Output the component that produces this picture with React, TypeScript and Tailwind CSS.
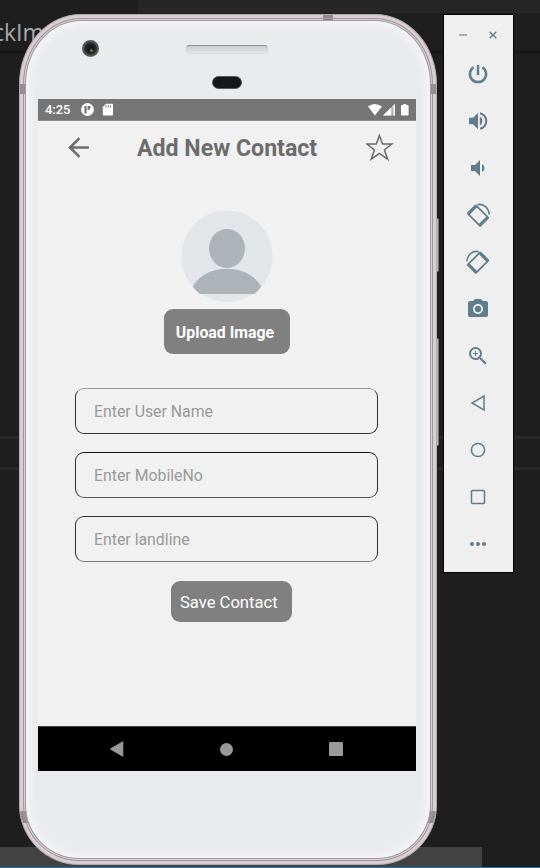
import React from "react";
import { MdPowerSettingsNew, MdVolumeUp, MdVolumeDown, MdCameraAlt, MdZoomIn, MdArrowBack } from "react-icons/md";

function RotateIcon({ flip }: { flip?: boolean }) {
  return (
    <svg width="26" height="26" viewBox="0 0 26 26" fill="none" className={flip ? "-scale-x-100" : ""}>
      <g transform="translate(13 13.6) rotate(-45)">
        <path
          fillRule="evenodd"
          fill="currentColor"
          d="M-5.2 -9.8H5.2Q6.7 -9.8 6.7 -8.3V8.3Q6.7 9.8 5.2 9.8H-5.2Q-6.7 9.8 -6.7 8.3V-8.3Q-6.7 -9.8 -5.2 -9.8ZM-5 -6.6V6.6H5V-6.6Z"
        />
      </g>
      <path d="M12.4 2.6C18.6 1.4 23.8 6 24.2 12.4" stroke="currentColor" strokeWidth="1.6" />
    </svg>
  );
}

function Backdrop() {
  return (
    <div className="absolute inset-0 flex flex-col bg-[#1e1e1e]">
      <div className="flex h-[13px] shrink-0">
        <div className="w-[138px]" />
        <div className="flex-1 bg-[#262626]" />
      </div>
      <div className="flex h-[38px] shrink-0 items-center font-['Open_Sans',sans-serif] text-[23px] leading-none text-[#a6a8ad]">
        <span className="-ml-[7px]">ckIm</span>
      </div>
      <div className="h-1 shrink-0 bg-gradient-to-b from-[#141414] to-[#1e1e1e]" />
      <div className="h-[381px] shrink-0" />
      <div className="h-[3px] shrink-0 bg-[#282828]" />
      <div className="h-7 shrink-0" />
      <div className="h-[3px] shrink-0 bg-[#282828]" />
      <div className="flex-1" />
      <div className="h-5 w-[482px] shrink-0 bg-[#424242]" />
      <div className="h-px shrink-0 bg-[#1b78b8]" />
    </div>
  );
}

function StatusBar() {
  return (
    <div className="flex h-[22px] shrink-0 items-center border-b border-[#8d8d8d] bg-[#757575] pl-[7px] pr-[7px] text-white">
      <span className="w-[26px] pt-px text-[12.9px] font-medium leading-none">4:25</span>
      <svg className="ml-[10px]" width="13" height="13" viewBox="0 0 13 13">
        <circle cx="6.5" cy="6.5" r="6.4" fill="#fff" />
        <path d="M3.4 3H5.6V10.4H3.4ZM6.6 3H9.4V4.8Q9.4 7 6.6 7Z" fill="#757575" />
      </svg>
      <svg className="ml-[8px]" width="12" height="13" viewBox="0 0 12 13">
        <path d="M4 .8H10Q11 .8 11 1.8V11.4Q11 12.4 10 12.4H1.8Q.8 12.4 .8 11.4V4Z" fill="#fff" />
        <path d="M4 2.2V4.4M6.3 2.2V4.4M8.6 2.2V4.4" stroke="#757575" strokeWidth="1" />
      </svg>
      <div className="flex-1" />
      <svg width="42" height="14" viewBox="0 0 42 14">
        <path d="M1 3.4Q7.5-1.6 14.9 3.4L8 12.4Z" fill="#fff" />
        <path d="M16 12.4L28 1V12.4Z" fill="#fff" opacity=".45" />
        <path d="M16 12.4L24.2 4.6V12.4ZM25.4 3.4L28 1V12.4H26.6V4H25.4Z" fill="#fff" />
        <path d="M36 1H39.2V2H40.6Q41.6 2 41.6 3V11.6Q41.6 12.6 40.6 12.6H35Q34 12.6 34 11.6V3Q34 2 35 2H36Z" fill="#fff" />
      </svg>
    </div>
  );
}

function Field({ label, className }: { label: string; className: string }) {
  return (
    <div className={`flex w-[303px] items-center rounded-[9px] border pl-[18px] pt-px text-[15.85px] text-[#999] ${className}`}>
      {label}
    </div>
  );
}

function Screen() {
  return (
    <div className="flex h-[672px] w-[378px] flex-col bg-[#f1f1f1] font-[Roboto,sans-serif]">
      <StatusBar />
      <header className="flex h-[53px] shrink-0 items-center pl-[25px] pr-[22px] text-[#6c6c6c]">
        <MdArrowBack size={31} className="shrink-0" />
        <h1 className="ml-[43px] w-[183px] whitespace-nowrap pt-[3px] text-[23.15px] font-bold leading-none">Add New Contact</h1>
        <svg className="mb-[2px] ml-auto" width="28" height="28" viewBox="0 0 28 28" fill="none" stroke="currentColor" strokeWidth="1.5">
          <path d="M13.4 2.4L16.5 11.1H25.8L18.4 16.9L21.6 26.2L13.4 20.4L5.2 26.2L8.4 16.9L1 11.1H10.3Z" />
        </svg>
      </header>
      <main className="flex flex-1 flex-col items-center">
        <svg className="mt-[36px] shrink-0" width="92" height="92" viewBox="0 0 92 92">
          <circle cx="46" cy="46.3" r="45.7" fill="#e3e6e8" />
          <ellipse cx="46" cy="38.4" rx="18" ry="19.5" fill="#adb4b8" />
          <path d="M11.6 76.5C19 64.5 32 58.8 46 58.8S73 64.5 80.2 76.5Q77 80.9 73.4 84H18.8Q15 80.9 11.6 76.5Z" fill="#adb4b8" />
        </svg>
        <button className="mt-[7px] flex h-[45px] w-[126px] shrink-0 items-center justify-center whitespace-nowrap rounded-[9px] bg-[#808080] pr-1 pt-[2px] text-[15.85px] font-bold text-white">
          Upload Image
        </button>
        <div className="mr-[1px] mt-[34px] flex flex-col gap-[18px]">
          <Field label="Enter User Name" className="h-[46px] border-[#333] border-t-[#999]" />
          <Field label="Enter MobileNo" className="h-[46px] border-[#333] border-b-[#555] border-t-[#111]" />
          <Field label="Enter landline" className="h-[46px] border-[#333] border-b-[#777]" />
        </div>
        <button className="ml-[9px] mt-[19px] flex h-[41px] w-[121px] shrink-0 items-center whitespace-nowrap rounded-[9px] bg-[#808080] pl-[9px] pt-[4px] text-[16.6px] leading-none text-white">
          Save Contact
        </button>
      </main>
      <nav className="flex h-[45px] shrink-0 items-center border-t border-[#444] bg-black pl-[72px] text-[#999]">
        <svg width="14" height="16" viewBox="0 0 14 16">
          <path d="M12.8 .8V15.2L.4 8Z" fill="currentColor" stroke="currentColor" strokeLinejoin="round" />
        </svg>
        <div className="ml-24 size-[13px] rounded-full bg-current" />
        <div className="ml-24 size-[14px] rounded-[1px] bg-current" />
      </nav>
    </div>
  );
}

function Phone() {
  return (
    <div className="relative ml-[19px] mt-[14px] h-[851px] w-[418px] shrink-0">
      <div className="absolute -right-[2px] top-[204px] h-[54px] w-2 rounded-r-[2px] border-y border-r border-[#777] bg-[#b7b7b7]" />
      <div className="absolute -right-[2px] top-[324px] h-[108px] w-2 rounded-r-[2px] border-y border-r border-[#777] bg-[#b7b7b7]" />
      <div className="relative flex h-full w-full overflow-hidden rounded-[62px/70px] rounded-b-[60px] border border-[#b3aaac] bg-[#d8cfd2] p-[3px]">
        <div className="absolute left-[303px] top-0 h-[5px] w-[10px] bg-[#938b8d]" />
        <div className="absolute -left-px top-[69px] h-[10px] w-[8px] bg-[#948c8e]" />
        <div className="absolute -right-px top-[69px] h-[10px] w-[8px] bg-[#948c8e]" />
        <div className="absolute -left-px top-[796px] h-[12px] w-[10px] bg-[#948c8e]" />
        <div className="absolute -right-px top-[796px] h-[12px] w-[10px] bg-[#948c8e]" />
        <div className="relative flex flex-1 rounded-[58px/66px] rounded-b-[56px] border border-[#9d9598] p-px">
          <div className="relative flex flex-1 flex-col rounded-[56px/64px] rounded-b-[54px] border border-[#a39b9e] bg-[#eaebed] shadow-[inset_0_0_9px_3px_#f6f7fa]">
            <div className="flex h-[78px] shrink-0 pl-[56px]">
              <div className="mt-[19px] size-[17px] rounded-full border-2 border-[#55585b] bg-[radial-gradient(circle,#17191a_0_30%,#343739_70%)] p-[4px]">
                <div className="ml-[2px] mt-[3px] size-[3px] rounded-full bg-[#77713b]" />
              </div>
              <div className="ml-[86px] mt-[24px] flex w-[84px] flex-col items-center">
                <div className="h-[9px] w-full rounded-full border border-[#dcdee1] border-t-[#8e939b] bg-gradient-to-b from-[#c9ccd3] to-[#e3e4e7]" />
                <div className="mr-px mt-[22px] h-[13px] w-[30px] rounded-full border border-[#555] bg-[#15171a]" />
              </div>
            </div>
            <div className="pl-[12px]">
              <Screen />
            </div>
          </div>
        </div>
      </div>
    </div>
  );
}

function EmulatorBar() {
  return (
    <aside className="relative ml-[6px] mt-[14px] flex h-[559px] w-[71px] shrink-0 flex-col items-center border border-black bg-[#efefef] text-[#607d8b]">
      <div className="flex h-[35px] w-full shrink-0 items-center pl-[15px] pt-[5px]">
        <div className="h-[1.5px] w-[8px] bg-[#9eb0b9]" />
        <svg className="ml-[22px]" width="8" height="8" viewBox="0 0 8 8" stroke="currentColor" strokeWidth="1.4">
          <path d="M.7 .7L7.3 7.3M7.3 .7L.7 7.3" />
        </svg>
      </div>
      {[
        <svg width="24" height="24" viewBox="0 0 24 24" fill="none" stroke="currentColor" strokeWidth="2.5">
          <path d="M12 3V13M7.6 5.2A8.1 8.1 0 1 0 16.4 5.2" />
        </svg>,
        <svg width="24" height="24" viewBox="0 0 24 24">
          <path d="M3 8.8V15.2H7L12 20.2V3.8L7 8.8Z" fill="currentColor" />
          <path d="M13.8 7.6A5 5 0 0 1 13.8 16.4Z" fill="currentColor" />
          <path d="M14 4.2A8 8 0 0 1 14 19.8" fill="none" stroke="currentColor" strokeWidth="2.2" />
        </svg>,
        <MdVolumeDown size={24} />,
        <RotateIcon />,
        <RotateIcon flip />,
        <MdCameraAlt size={24} />,
        <MdZoomIn size={24} />,
        <svg width="16" height="18" viewBox="0 0 16 18" fill="none" stroke="currentColor" strokeWidth="1.5">
          <path d="M14 2V16L2 9Z" />
        </svg>,
        <svg width="16" height="16" viewBox="0 0 16 16" fill="none" stroke="currentColor" strokeWidth="1.5">
          <circle cx="8" cy="8" r="6.6" />
        </svg>,
        <svg width="16" height="16" viewBox="0 0 16 16" fill="none" stroke="currentColor" strokeWidth="1.5">
          <rect x="1.5" y="1.5" width="13" height="13" rx="1" />
        </svg>,
        <svg width="16" height="6" viewBox="0 0 16 6" fill="currentColor">
          <circle cx="2" cy="3" r="2" />
          <circle cx="8" cy="3" r="2" />
          <circle cx="14" cy="3" r="2" />
        </svg>,
      ].map((icon, i) => (
        <div key={i} className="flex h-[47px] w-full shrink-0 items-center justify-center pr-[1px]">
          {icon}
        </div>
      ))}
    </aside>
  );
}

export default function App() {
  return (
    <div className="relative flex h-[868px] w-[540px] items-start overflow-hidden">
      <Backdrop />
      <Phone />
      <EmulatorBar />
    </div>
  );
}
